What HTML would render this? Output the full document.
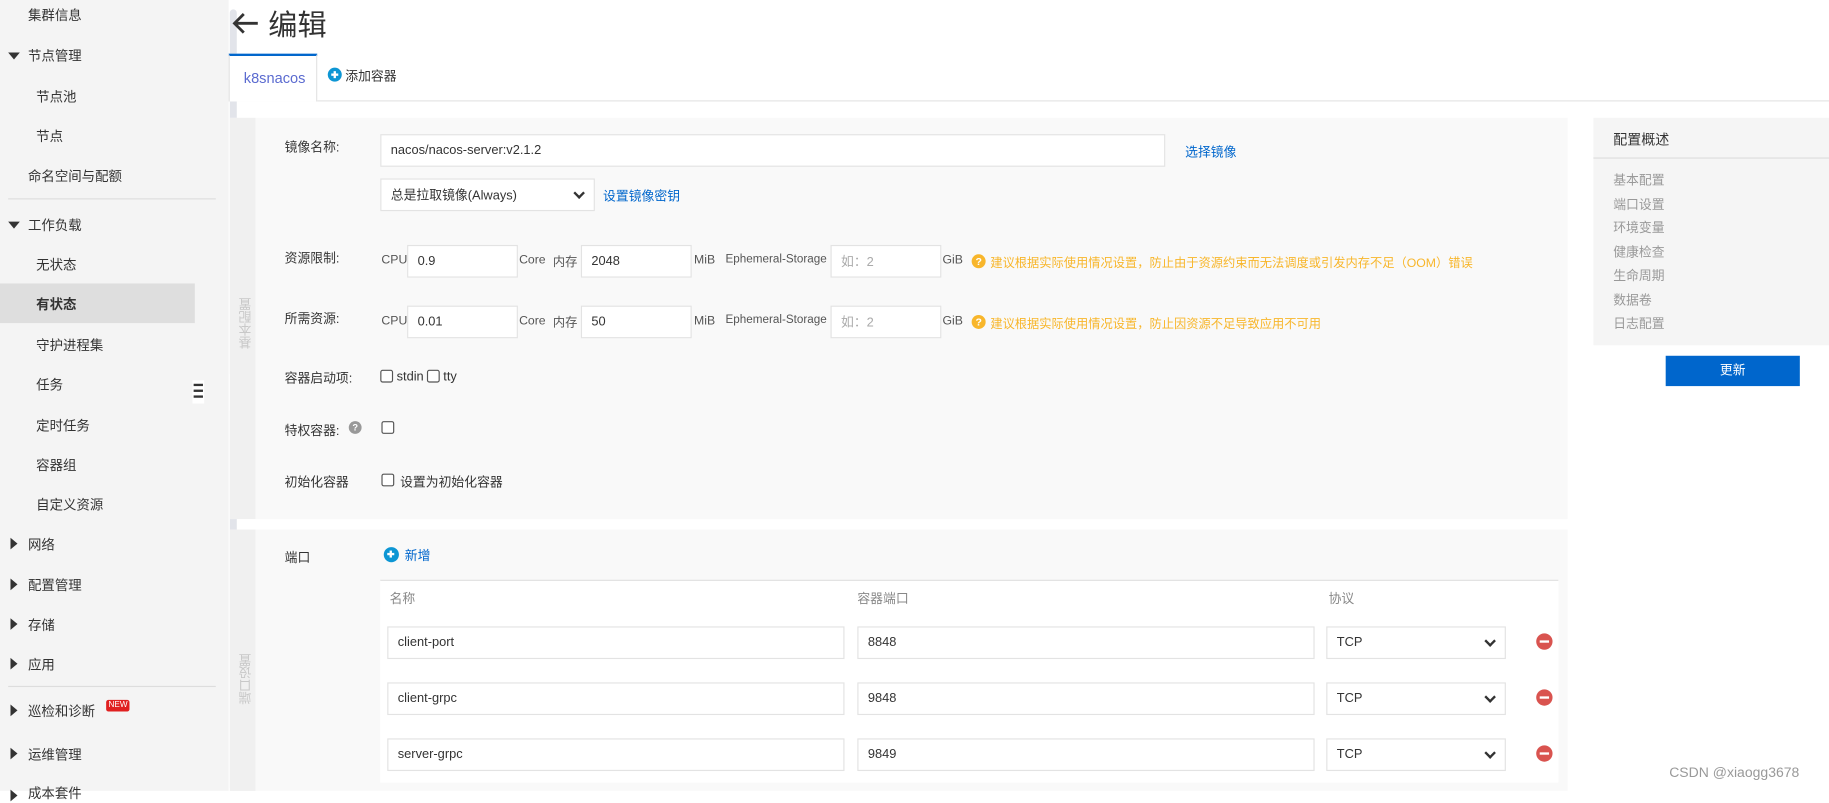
<!DOCTYPE html>
<html><head><meta charset="utf-8"><style>
*{box-sizing:border-box;margin:0;padding:0}
html,body{width:1829px;height:791px;overflow:hidden;background:#fff}
#w{position:absolute;left:0;top:0;width:1568px;height:678px;transform:scale(1.16645);transform-origin:0 0;font-family:"Liberation Sans","Noto Sans CJK SC",sans-serif;font-size:11.5px;color:#333}
.a{position:absolute;white-space:nowrap}
.side{position:absolute;left:0;top:0;width:196px;height:678px;background:#f4f4f4}
.sb{position:absolute;left:197px;top:8px;width:6px;height:315px;background:#e2e4ea;border-radius:3px}
.sb2{position:absolute;left:197px;top:350px;width:6px;height:328px;background:#e2e4ea;border-radius:3px}
.tri{position:absolute;width:0;height:0}
.td{border-left:5px solid transparent;border-right:5px solid transparent;border-top:6px solid #333}
.tr{border-top:5px solid transparent;border-bottom:5px solid transparent;border-left:6px solid #333}
.inp{position:absolute;background:#fff;border:1px solid #e3e3e3;padding-left:8px;display:flex;align-items:center;font-size:11px;color:#333}
.sel::after{content:"";position:absolute;right:9px;top:50%;width:5px;height:5px;border-right:2px solid #333;border-bottom:2px solid #333;transform:translateY(-70%) rotate(45deg)}
.lab{position:absolute;font-size:11px;color:#333;white-space:nowrap}
.u{position:absolute;font-size:10.5px;color:#555;white-space:nowrap}
.warn{color:#f8b62b}
.qi{position:absolute;width:12px;height:12px;border-radius:50%;background:#f8b62b;color:#fff;font-size:9px;text-align:center;line-height:12px;font-weight:bold}
.cb{position:absolute;width:11px;height:11px;border:1px solid #555;border-radius:2px;background:#fff}
.rm{position:absolute;width:14px;height:14px;border-radius:50%;background:#d9534f}
.rm::after{content:"";position:absolute;left:3px;top:6px;width:8px;height:2px;background:#fff}
.plus{position:absolute;width:12px;height:12px;border-radius:50%;background:#0d96d4}
.plus::before{content:"";position:absolute;left:3px;top:5px;width:6px;height:2px;background:#fff}
.plus::after{content:"";position:absolute;left:5px;top:3px;width:2px;height:6px;background:#fff}
.vt{position:absolute;writing-mode:vertical-rl;transform:rotate(180deg);color:#c8c8c8;font-size:11px}
</style></head><body><div id="w">
<div class="side"></div>
<div class="a" style="left:0;top:243px;width:167px;height:34px;background:#dedede"></div>
<div class="sb"></div><div class="sb2"></div>
<div class="a" style="left:165px;top:326px;width:10px;height:20px;background:#fff"></div>
<div class="a" style="left:166px;top:329px;width:8px;height:2px;background:#333"></div>
<div class="a" style="left:166px;top:334px;width:8px;height:2px;background:#333"></div>
<div class="a" style="left:166px;top:339px;width:8px;height:2px;background:#333"></div>
<div class="a" style="left:7px;top:170px;width:178px;height:1px;background:#ddd"></div>
<div class="a" style="left:7px;top:588px;width:178px;height:1px;background:#ddd"></div>

<div class="a" style="left:24px;top:5px">集群信息</div>
<div class="tri td" style="left:7px;top:45px"></div><div class="a" style="left:24px;top:40px">节点管理</div>
<div class="a" style="left:31px;top:75px">节点池</div>
<div class="a" style="left:31px;top:109px">节点</div>
<div class="a" style="left:24px;top:143px">命名空间与配额</div>
<div class="tri td" style="left:7px;top:190px"></div><div class="a" style="left:24px;top:185px">工作负载</div>
<div class="a" style="left:31px;top:219px">无状态</div>
<div class="a" style="left:31px;top:253px;font-weight:bold">有状态</div>
<div class="a" style="left:31px;top:288px">守护进程集</div>
<div class="a" style="left:31px;top:322px">任务</div>
<div class="a" style="left:31px;top:357px">定时任务</div>
<div class="a" style="left:31px;top:391px">容器组</div>
<div class="a" style="left:31px;top:425px">自定义资源</div>
<div class="tri tr" style="left:9px;top:461px"></div><div class="a" style="left:24px;top:459px">网络</div>
<div class="tri tr" style="left:9px;top:496px"></div><div class="a" style="left:24px;top:494px">配置管理</div>
<div class="tri tr" style="left:9px;top:530px"></div><div class="a" style="left:24px;top:528px">存储</div>
<div class="tri tr" style="left:9px;top:564px"></div><div class="a" style="left:24px;top:562px">应用</div>
<div class="tri tr" style="left:9px;top:604px"></div><div class="a" style="left:24px;top:602px">巡检和诊断</div>
<div class="a" style="left:91px;top:600px;background:#e02020;color:#fff;font-size:7px;padding:0 2px;line-height:10px;border-radius:2px">NEW</div>
<div class="tri tr" style="left:9px;top:641px"></div><div class="a" style="left:24px;top:639px">运维管理</div>
<div class="tri tr" style="left:9px;top:677px"></div><div class="a" style="left:24px;top:672px">成本套件</div>

<svg class="a" style="left:199px;top:10px" width="24" height="20" viewBox="0 0 24 20"><path d="M22 10H3M10 2L2 10l8 8" stroke="#333" stroke-width="2.4" fill="none"/></svg>
<div class="a" style="left:230px;top:2px;font-size:25px;color:#333">编辑</div>
<div class="a" style="left:196px;top:86px;width:1372px;height:1px;background:#e3e3e3"></div>
<div class="a" style="left:196px;top:46px;width:76px;height:41px;background:#fff;border:1px solid #e3e3e3;border-top:2px solid #0066cc;border-bottom:none"></div>
<div class="a" style="left:209px;top:60px;font-size:12.5px;color:#5b6bd0">k8snacos</div>
<div class="plus" style="left:281px;top:58px"></div>
<div class="a" style="left:296px;top:57px;font-size:11px">添加容器</div>

<div class="a" style="left:197px;top:101px;width:1147px;height:344px;background:#f9f9f9"></div>
<div class="a" style="left:197px;top:101px;width:22px;height:344px;background:#f0f0f0"></div>
<div class="vt" style="left:203px;top:255px">基本配置</div>
<div class="lab" style="left:244px;top:118px">镜像名称:</div>
<div class="inp" style="left:326px;top:115px;width:673px;height:28px">nacos/nacos-server:v2.1.2</div>
<div class="a" style="left:1016px;top:122px;color:#0066cc;font-size:11px">选择镜像</div>
<div class="inp sel" style="left:326px;top:153px;width:184px;height:28px">总是拉取镜像(Always)</div>
<div class="a" style="left:517px;top:160px;color:#0066cc;font-size:11px">设置镜像密钥</div>

<div class="lab" style="left:244px;top:213px">资源限制:</div>
<div class="u" style="left:327px;top:217px">CPU</div>
<div class="inp" style="left:349px;top:210px;width:95px;height:28px">0.9</div>
<div class="u" style="left:445px;top:217px">Core</div>
<div class="u" style="left:474px;top:217px">内存</div>
<div class="inp" style="left:498px;top:210px;width:95px;height:28px">2048</div>
<div class="u" style="left:595px;top:217px">MiB</div>
<div class="u" style="left:622px;top:217px;font-size:10px">Ephemeral-Storage</div>
<div class="inp" style="left:712px;top:210px;width:95px;height:28px;color:#aaa">如：2</div>
<div class="u" style="left:808px;top:217px">GiB</div>
<div class="qi" style="left:833px;top:218px">?</div>
<div class="a warn" style="left:849px;top:218px;font-size:10.5px">建议根据实际使用情况设置，防止由于资源约束而无法调度或引发内存不足（OOM）错误</div>

<div class="lab" style="left:244px;top:265px">所需资源:</div>
<div class="u" style="left:327px;top:269px">CPU</div>
<div class="inp" style="left:349px;top:262px;width:95px;height:28px">0.01</div>
<div class="u" style="left:445px;top:269px">Core</div>
<div class="u" style="left:474px;top:269px">内存</div>
<div class="inp" style="left:498px;top:262px;width:95px;height:28px">50</div>
<div class="u" style="left:595px;top:269px">MiB</div>
<div class="u" style="left:622px;top:269px;font-size:10px">Ephemeral-Storage</div>
<div class="inp" style="left:712px;top:262px;width:95px;height:28px;color:#aaa">如：2</div>
<div class="u" style="left:808px;top:269px">GiB</div>
<div class="qi" style="left:833px;top:270px">?</div>
<div class="a warn" style="left:849px;top:270px;font-size:10.5px">建议根据实际使用情况设置，防止因资源不足导致应用不可用</div>

<div class="lab" style="left:244px;top:316px">容器启动项:</div>
<div class="cb" style="left:326px;top:317px"></div><div class="a" style="left:340px;top:317px;font-size:11px">stdin</div>
<div class="cb" style="left:366px;top:317px"></div><div class="a" style="left:380px;top:317px;font-size:11px">tty</div>
<div class="lab" style="left:244px;top:361px">特权容器:</div>
<div class="a" style="left:299px;top:361px;width:11px;height:11px;border-radius:50%;background:#999;color:#fff;font-size:8px;text-align:center;line-height:11px;font-weight:bold">?</div>
<div class="cb" style="left:327px;top:361px"></div>
<div class="lab" style="left:244px;top:405px">初始化容器</div>
<div class="cb" style="left:327px;top:406px"></div><div class="a" style="left:343px;top:405px;font-size:11px">设置为初始化容器</div>

<div class="a" style="left:197px;top:454px;width:1147px;height:224px;background:#f9f9f9"></div>
<div class="a" style="left:197px;top:454px;width:22px;height:224px;background:#f0f0f0"></div>
<div class="vt" style="left:203px;top:560px">端口设置</div>
<div class="lab" style="left:244px;top:470px">端口</div>
<div class="plus" style="left:329px;top:469px;width:13px;height:13px"></div>
<div class="a" style="left:347px;top:468px;color:#0066cc;font-size:11px">新增</div>
<div class="a" style="left:326px;top:497px;width:1010px;height:174px;background:#fff;border-top:1px solid #e0e0e0"></div>
<div class="a" style="left:334px;top:505px;color:#888;font-size:11px">名称</div>
<div class="a" style="left:735px;top:505px;color:#888;font-size:11px">容器端口</div>
<div class="a" style="left:1139px;top:505px;color:#888;font-size:11px">协议</div>

<div class="inp" style="left:332px;top:537px;width:392px;height:28px">client-port</div>
<div class="inp" style="left:735px;top:537px;width:392px;height:28px">8848</div>
<div class="inp sel" style="left:1137px;top:537px;width:154px;height:28px">TCP</div>
<div class="rm" style="left:1317px;top:543px"></div>

<div class="inp" style="left:332px;top:585px;width:392px;height:28px">client-grpc</div>
<div class="inp" style="left:735px;top:585px;width:392px;height:28px">9848</div>
<div class="inp sel" style="left:1137px;top:585px;width:154px;height:28px">TCP</div>
<div class="rm" style="left:1317px;top:591px"></div>

<div class="inp" style="left:332px;top:633px;width:392px;height:28px">server-grpc</div>
<div class="inp" style="left:735px;top:633px;width:392px;height:28px">9849</div>
<div class="inp sel" style="left:1137px;top:633px;width:154px;height:28px">TCP</div>
<div class="rm" style="left:1317px;top:639px"></div>

<div class="a" style="left:1366px;top:101px;width:202px;height:195px;background:#f5f5f5"></div>
<div class="a" style="left:1383px;top:111px;font-size:12px;color:#333">配置概述</div>
<div class="a" style="left:1366px;top:135px;width:202px;height:1px;background:#ddd"></div>
<div class="a" style="left:1383px;top:145px;color:#999;font-size:11px;line-height:20.5px;white-space:normal">基本配置<br>端口设置<br>环境变量<br>健康检查<br>生命周期<br>数据卷<br>日志配置</div>
<div class="a" style="left:1428px;top:305px;width:115px;height:26px;background:#0066cc;color:#fff;text-align:center;line-height:26px;font-size:11px">更新</div>

<div class="a" style="left:1431px;top:655px;font-size:12px;color:#999">CSDN @xiaogg3678</div>
</div></body></html>
